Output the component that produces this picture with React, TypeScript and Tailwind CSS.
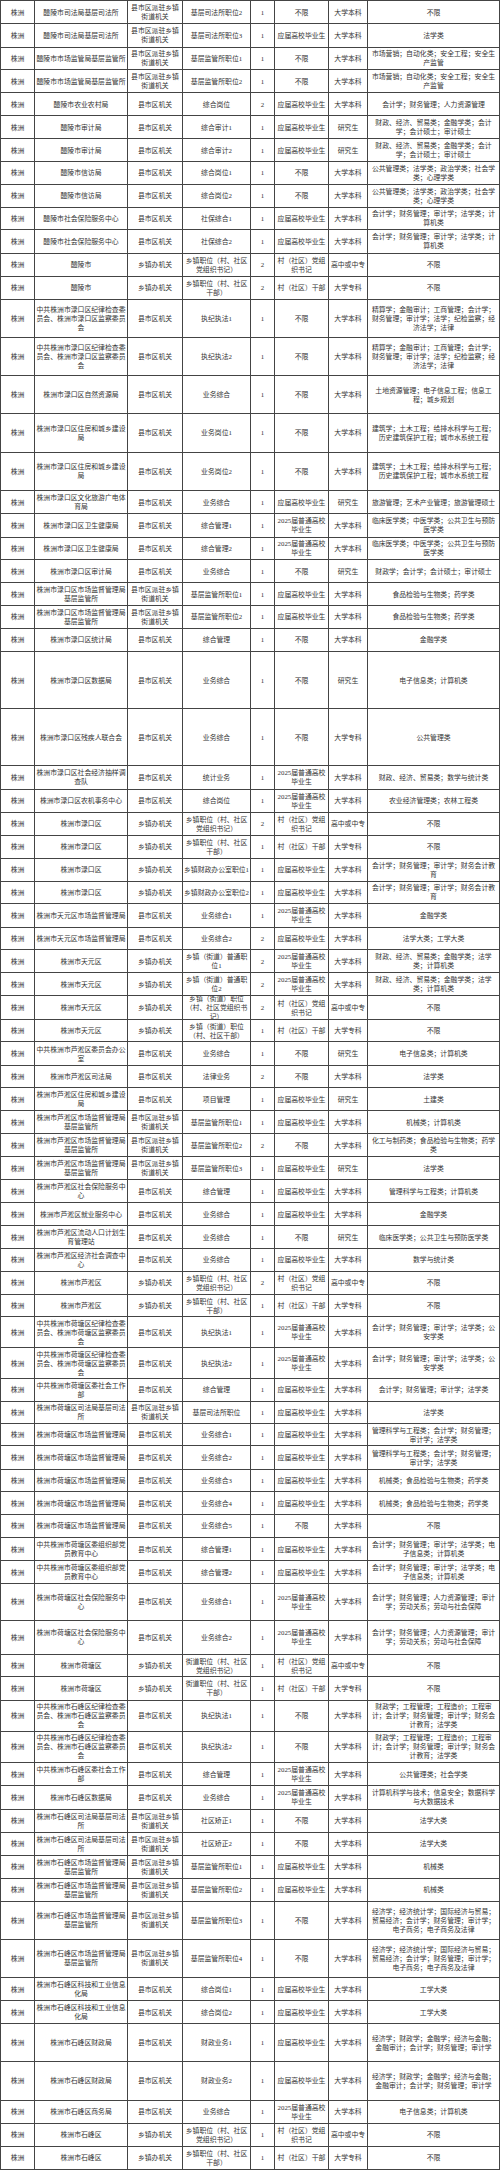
import React from "react";

const A = "县市区机关";
const B = "县市区派驻乡镇街道机关";
const C = "乡镇办机关";
const Y = "应届高校毕业生";
const G = "2025届普通高校毕业生";
const N = "不限";
const BK = "大学本科";
const ZK = "大学专科";
const YJ = "研究生";
const GZ = "高中或中专";
const SJ = "村（社区）党组织书记";
const GB = "村（社区）干部";

const SF = "醴陵市司法局基层司法所";
const SC = "醴陵市市场监管局基层监管所";
const LK_JW = "中共株洲市渌口区纪律检查委员会、株洲市渌口区监察委员会";
const HT_JW = "中共株洲市荷塘区纪律检查委员会、株洲市荷塘区监察委员会";
const SF_JW = "中共株洲市石峰区纪律检查委员会、株洲市石峰区监察委员会";

// [单位, 机关层级, 职位, 人数, 身份, 学历, 专业]
type Row = [string, string, string, string, string, string, string];

const rows: Row[] = [
  [SF, B, "基层司法所职位2", "1", N, BK, N],
  [SF, B, "基层司法所职位3", "1", Y, BK, "法学类"],
  [SC, B, "基层监管所职位1", "1", N, BK, "市场营销；自动化类；安全工程；安全生产监管"],
  [SC, B, "基层监管所职位2", "1", N, BK, "市场营销；自动化类；安全工程；安全生产监管"],
  ["醴陵市农业农村局", A, "综合岗位", "2", Y, BK, "会计学；财务管理；人力资源管理"],
  ["醴陵市审计局", A, "综合审计1", "1", Y, YJ, "财政、经济、贸易类；金融学类；会计学；会计硕士；审计硕士"],
  ["醴陵市审计局", A, "综合审计2", "1", Y, YJ, "财政、经济、贸易类；金融学类；会计学；会计硕士；审计硕士"],
  ["醴陵市信访局", A, "综合岗位1", "1", N, BK, "公共管理类；法学类；政治学类；社会学类；心理学类"],
  ["醴陵市信访局", A, "综合岗位2", "1", N, BK, "公共管理类；法学类；政治学类；社会学类；心理学类"],
  ["醴陵市社会保险服务中心", A, "社保综合1", "1", Y, BK, "会计学；财务管理；审计学；法学类；计算机类"],
  ["醴陵市社会保险服务中心", A, "社保综合2", "1", Y, BK, "会计学；财务管理；审计学；法学类；计算机类"],
  ["醴陵市", C, "乡镇职位（村、社区党组织书记）", "2", SJ, GZ, N],
  ["醴陵市", C, "乡镇职位（村、社区干部）", "2", GB, ZK, N],
  [LK_JW, A, "执纪执法1", "1", N, BK, "精算学；金融审计；工商管理；会计学；财务管理；审计学；法学；纪检监察；经济法学；法律"],
  [LK_JW, A, "执纪执法2", "1", N, BK, "精算学；金融审计；工商管理；会计学；财务管理；审计学；法学；纪检监察；经济法学；法律"],
  ["株洲市渌口区自然资源局", A, "业务综合", "1", N, BK, "土地资源管理；电子信息工程；信息工程；城乡规划"],
  ["株洲市渌口区住房和城乡建设局", A, "业务岗位1", "1", N, BK, "建筑学；土木工程；给排水科学与工程；历史建筑保护工程；城市水系统工程"],
  ["株洲市渌口区住房和城乡建设局", A, "业务岗位2", "1", N, BK, "建筑学；土木工程；给排水科学与工程；历史建筑保护工程；城市水系统工程"],
  ["株洲市渌口区文化旅游广电体育局", A, "业务综合", "1", Y, YJ, "旅游管理；艺术产业管理；旅游管理硕士"],
  ["株洲市渌口区卫生健康局", A, "综合管理1", "1", G, BK, "临床医学类；中医学类；公共卫生与预防医学类"],
  ["株洲市渌口区卫生健康局", A, "综合管理2", "1", G, BK, "临床医学类；中医学类；公共卫生与预防医学类"],
  ["株洲市渌口区审计局", A, "业务综合", "1", N, YJ, "财政学；会计学；会计硕士；审计硕士"],
  ["株洲市渌口区市场监督管理局基层监管所", B, "基层监管所职位1", "1", Y, BK, "食品检验与生物类；药学类"],
  ["株洲市渌口区市场监督管理局基层监管所", B, "基层监管所职位2", "1", Y, BK, "食品检验与生物类；药学类"],
  ["株洲市渌口区统计局", A, "综合管理", "1", N, BK, "金融学类"],
  ["株洲市渌口区数据局", A, "业务综合", "1", N, YJ, "电子信息类；计算机类"],
  ["株洲市渌口区残疾人联合会", A, "业务综合", "1", N, ZK, "公共管理类"],
  ["株洲市渌口区社会经济抽样调查队", A, "统计业务", "1", G, BK, "财政、经济、贸易类；数学与统计类"],
  ["株洲市渌口区农机事务中心", A, "综合岗位", "1", G, BK, "农业经济管理类；农林工程类"],
  ["株洲市渌口区", C, "乡镇职位（村、社区党组织书记）", "2", SJ, GZ, N],
  ["株洲市渌口区", C, "乡镇职位（村、社区干部）", "1", GB, ZK, N],
  ["株洲市渌口区", C, "乡镇财政办公室职位1", "1", Y, BK, "会计学；财务管理；审计学；财务会计教育"],
  ["株洲市渌口区", C, "乡镇财政办公室职位2", "1", Y, BK, "会计学；财务管理；审计学；财务会计教育"],
  ["株洲市天元区市场监督管理局", A, "业务综合1", "1", G, BK, "金融学类"],
  ["株洲市天元区市场监督管理局", A, "业务综合2", "2", Y, BK, "法学大类；工学大类"],
  ["株洲市天元区", C, "乡镇（街道）普通职位1", "2", G, BK, "财政、经济、贸易类；金融学类；法学类；计算机类"],
  ["株洲市天元区", C, "乡镇（街道）普通职位2", "2", G, BK, "财政、经济、贸易类；金融学类；法学类；计算机类"],
  ["株洲市天元区", C, "乡镇（街道）职位（村、社区党组织书记）", "2", SJ, GZ, N],
  ["株洲市天元区", C, "乡镇（街道）职位（村、社区干部）", "1", GB, ZK, N],
  ["中共株洲市芦淞区委员会办公室", A, "业务综合", "1", N, YJ, "电子信息类；计算机类"],
  ["株洲市芦淞区司法局", A, "法律业务", "2", N, BK, "法学类"],
  ["株洲市芦淞区住房和城乡建设局", A, "项目管理", "1", Y, YJ, "土建类"],
  ["株洲市芦淞区市场监督管理局基层监管所", B, "基层监管所职位1", "1", Y, BK, "机械类；计算机类"],
  ["株洲市芦淞区市场监督管理局基层监管所", B, "基层监管所职位2", "2", N, BK, "化工与制药类；食品检验与生物类；药学类"],
  ["株洲市芦淞区市场监督管理局基层监管所", B, "基层监管所职位3", "1", Y, YJ, "法学类"],
  ["株洲市芦淞区社会保险服务中心", A, "综合管理", "1", Y, BK, "管理科学与工程类；计算机类"],
  ["株洲市芦淞区就业服务中心", A, "业务综合", "1", Y, BK, "金融学类"],
  ["株洲市芦淞区流动人口计划生育管理站", A, "业务综合", "1", N, YJ, "临床医学类；公共卫生与预防医学类"],
  ["株洲市芦淞区经济社会调查中心", A, "业务综合", "1", Y, BK, "数学与统计类"],
  ["株洲市芦淞区", C, "乡镇职位（村、社区党组织书记）", "2", SJ, GZ, N],
  ["株洲市芦淞区", C, "乡镇职位（村、社区干部）", "1", GB, ZK, N],
  [HT_JW, A, "执纪执法1", "1", G, BK, "会计学；财务管理；审计学；法学类；公安学类"],
  [HT_JW, A, "执纪执法2", "1", G, BK, "会计学；财务管理；审计学；法学类；公安学类"],
  ["中共株洲市荷塘区委社会工作部", A, "综合管理", "1", Y, BK, "会计学；财务管理；审计学；法学类"],
  ["株洲市荷塘区司法局基层司法所", B, "基层司法所职位", "1", Y, BK, "法学类"],
  ["株洲市荷塘区市场监督管理局", A, "业务综合1", "1", Y, BK, "管理科学与工程类；会计学；财务管理；审计学；法学类"],
  ["株洲市荷塘区市场监督管理局", A, "业务综合2", "1", Y, BK, "管理科学与工程类；会计学；财务管理；审计学；法学类"],
  ["株洲市荷塘区市场监督管理局", A, "业务综合3", "1", Y, BK, "机械类；食品检验与生物类；药学类"],
  ["株洲市荷塘区市场监督管理局", A, "业务综合4", "1", Y, BK, "机械类；食品检验与生物类；药学类"],
  ["株洲市荷塘区市场监督管理局", A, "业务综合5", "1", N, BK, N],
  ["中共株洲市荷塘区委组织部党员教育中心", A, "综合管理1", "1", Y, BK, "会计学；财务管理；审计学；法学类；电子信息类；计算机类"],
  ["中共株洲市荷塘区委组织部党员教育中心", A, "综合管理2", "1", Y, BK, "会计学；财务管理；审计学；法学类；电子信息类；计算机类"],
  ["株洲市荷塘区社会保险服务中心", A, "业务综合1", "1", G, BK, "会计学；财务管理；人力资源管理；审计学；劳动关系；劳动与社会保障"],
  ["株洲市荷塘区社会保险服务中心", A, "业务综合2", "1", G, BK, "会计学；财务管理；人力资源管理；审计学；劳动关系；劳动与社会保障"],
  ["株洲市荷塘区", C, "街道职位（村、社区党组织书记）", "1", SJ, GZ, N],
  ["株洲市荷塘区", C, "街道职位（村、社区干部）", "1", GB, ZK, N],
  [SF_JW, A, "执纪执法1", "1", N, BK, "财政学；工程管理；工程造价；工程审计；会计学；财务管理；审计学；财务会计教育；法学类"],
  [SF_JW, A, "执纪执法2", "1", N, BK, "财政学；工程管理；工程造价；工程审计；会计学；财务管理；审计学；财务会计教育；法学类"],
  ["中共株洲市石峰区委社会工作部", A, "综合管理", "1", G, BK, "公共管理类；社会学类"],
  ["株洲市石峰区数据局", A, "业务综合", "1", G, BK, "计算机科学与技术；信息安全；数据科学与大数据技术"],
  ["株洲市石峰区司法局基层司法所", B, "社区矫正1", "1", N, BK, "法学大类"],
  ["株洲市石峰区司法局基层司法所", B, "社区矫正2", "1", N, BK, "法学大类"],
  ["株洲市石峰区市场监督管理局基层监管所", B, "基层监管所职位1", "1", Y, BK, "机械类"],
  ["株洲市石峰区市场监督管理局基层监管所", B, "基层监管所职位2", "1", Y, BK, "机械类"],
  ["株洲市石峰区市场监督管理局基层监管所", B, "基层监管所职位3", "1", N, BK, "经济学；经济统计学；国际经济与贸易；贸易经济；会计学；财务管理；审计学；电子商务；电子商务及法律"],
  ["株洲市石峰区市场监督管理局基层监管所", B, "基层监管所职位4", "1", N, BK, "经济学；经济统计学；国际经济与贸易；贸易经济；会计学；财务管理；审计学；电子商务；电子商务及法律"],
  ["株洲市石峰区科技和工业信息化局", A, "综合岗位1", "1", Y, BK, "工学大类"],
  ["株洲市石峰区科技和工业信息化局", A, "综合岗位2", "1", Y, BK, "工学大类"],
  ["株洲市石峰区财政局", A, "财政业务1", "1", Y, BK, "经济学；财政学；金融学；经济与金融；金融审计；会计学；财务管理；审计学"],
  ["株洲市石峰区财政局", A, "财政业务2", "1", Y, BK, "经济学；财政学；金融学；经济与金融；金融审计；会计学；财务管理；审计学"],
  ["株洲市石峰区商务局", A, "业务综合", "1", G, BK, "电子信息类；计算机类"],
  ["株洲市石峰区", C, "乡镇职位（村、社区党组织书记）", "1", SJ, GZ, N],
  ["株洲市石峰区", C, "乡镇职位（村、社区干部）", "1", GB, ZK, N],
];

// y of each horizontal rule, measured off the sheet
const lines = [
  0, 23.3, 46.7, 69.3, 92.3, 115, 138.3, 161, 184, 206.7, 229.3, 252.7, 275.7, 299, 337.3, 375,
  413.3, 451.7, 490, 513.3, 536.7, 559.3, 582.3, 605, 628, 651, 708.3, 765, 789, 811.7, 835,
  857.7, 880.7, 903.3, 926.7, 949.3, 972.7, 995.7, 1019, 1041.7, 1065, 1087.5, 1110.7, 1133.3,
  1156.7, 1179.3, 1202.7, 1225.7, 1248.3, 1271, 1294, 1316.7, 1347.7, 1378.3, 1401, 1423.3,
  1445.7, 1469, 1491.7, 1514.3, 1537.3, 1560.7, 1583.3, 1620, 1654.3, 1676.7, 1700, 1731,
  1762.7, 1785.7, 1809, 1832.3, 1855, 1878.3, 1901, 1939.3, 1977.3, 2000.7, 2023.3, 2061.7,
  2100, 2123.3, 2146, 2169,
];

const cell =
  "flex items-center justify-center text-center overflow-hidden border-r border-[#444] shrink-0";

export default function App() {
  return (
    <div className="w-[500px] bg-white border-l border-t border-[#444] text-[#333] text-[6.85px] leading-[9px] font-['Liberation_Serif','Noto_Sans_CJK_SC',serif]">
      {rows.map((r, i) => (
        <div
          key={i}
          className="flex border-b border-[#444]"
          style={{ height: lines[i + 1] - lines[i] }}
        >
          <div className={`${cell} w-[34px]`}>株洲</div>
          <div className={`${cell} w-[93px]`}>{r[0]}</div>
          <div className={`${cell} w-[55px]`}>{r[1]}</div>
          <div className={`${cell} w-[68px]`}>{r[2]}</div>
          <div className={`${cell} w-[24px]`}>{r[3]}</div>
          <div className={`${cell} w-[54px]`}>{r[4]}</div>
          <div className={`${cell} w-[39px]`}>{r[5]}</div>
          <div className={`${cell} w-[132px] px-[2px]`}>{r[6]}</div>
        </div>
      ))}
    </div>
  );
}
